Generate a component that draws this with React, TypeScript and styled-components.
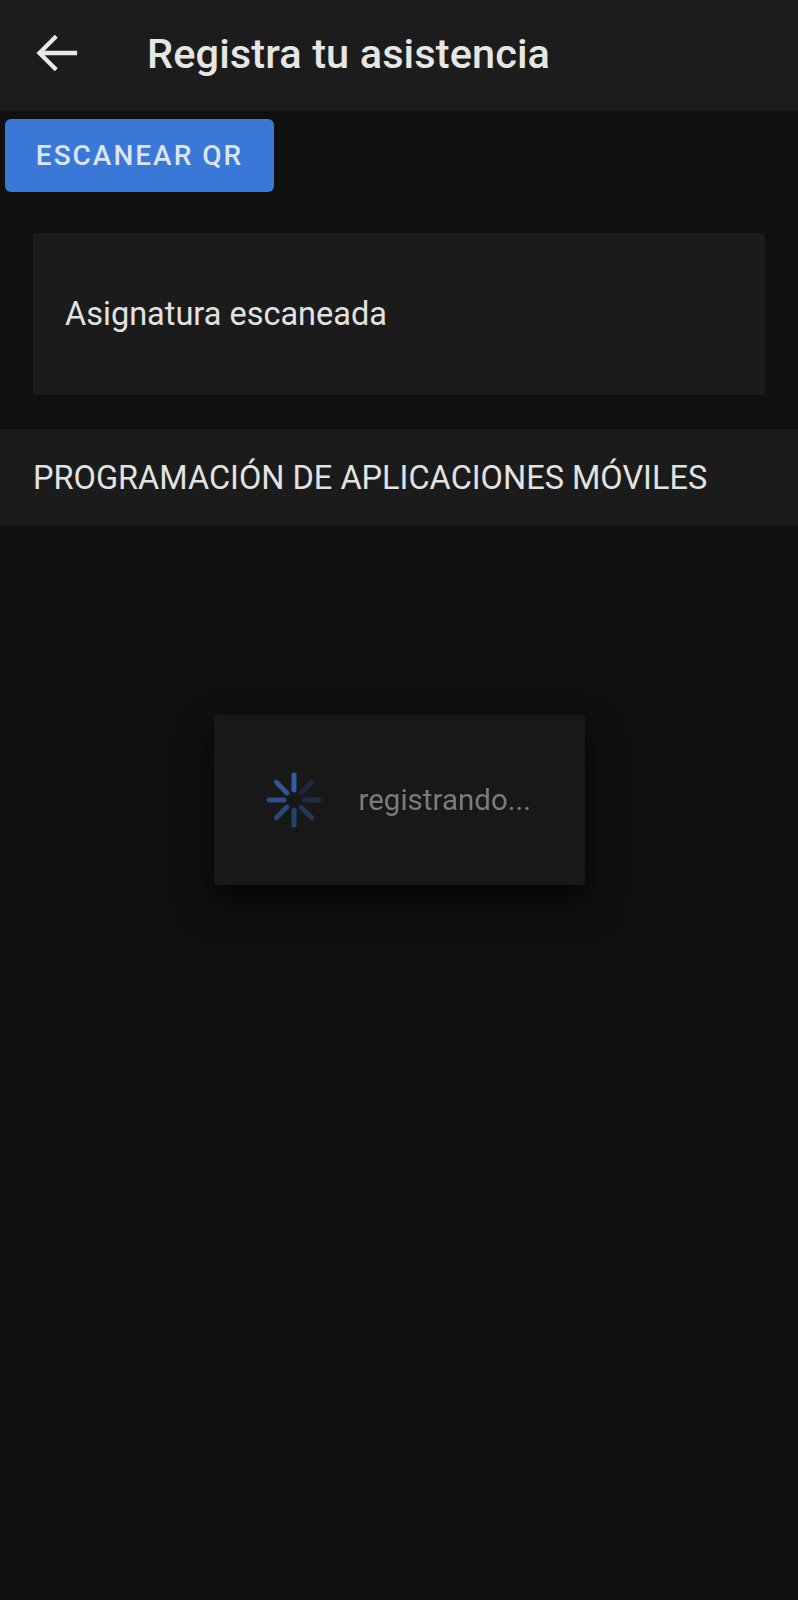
import React from "react";
import styled, { createGlobalStyle } from "styled-components";

const GlobalStyle = createGlobalStyle`
  html, body {
    margin: 0;
    padding: 0;
    background: #101010;
  }
  body {
    font-family: Roboto, "Noto Sans", "Liberation Sans", sans-serif;
    color: #e6e6e6;
    min-height: 1600px;
  }
  * { box-sizing: border-box; }
`;

const Page = styled.div`
  min-height: 1600px;
  background: #101010;
  display: flex;
  flex-direction: column;
`;

const Toolbar = styled.header`
  height: 111px;
  background: #1c1c1c;
  display: flex;
  align-items: center;
  padding: 0 0 5px 30px;
  gap: 63px;
`;

const BackButton = styled.button`
  width: 54px;
  height: 54px;
  padding: 0;
  border: none;
  background: transparent;
  color: #e8e8e8;
  display: flex;
  align-items: center;
  justify-content: center;
`;

const Title = styled.h1`
  margin: 0;
  font-size: 41.5px;
  font-weight: 500;
  color: #e6e6e6;
  letter-spacing: 0.1px;
`;

const Content = styled.main`
  display: flex;
  flex-direction: column;
  padding-top: 8px;
`;

const ScanButton = styled.button`
  align-self: flex-start;
  margin-left: 5px;
  width: 269px;
  height: 73px;
  border: none;
  border-radius: 6px;
  background: #3a78d8;
  color: #dde4ee;
  font-family: Roboto, "Liberation Sans", sans-serif;
  font-size: 28px;
  font-weight: 500;
  letter-spacing: 2px;
  text-transform: uppercase;
`;

const Card = styled.section`
  margin: 41px 33px 0 33px;
  height: 162px;
  background: #1b1b1b;
  display: flex;
  align-items: center;
  padding-left: 32px;
`;

const CardText = styled.span`
  font-size: 32.5px;
  color: #e2e2e2;
`;

const SubjectRow = styled.div`
  margin-top: 34px;
  height: 97px;
  background: #1b1b1b;
  display: flex;
  align-items: center;
  padding-left: 33px;
`;

const SubjectText = styled.span`
  font-size: 32.5px;
  color: #e2e2e2;
`;

const Overlay = styled.div`
  position: fixed;
  inset: 0;
  display: flex;
  align-items: center;
  justify-content: center;
  pointer-events: none;
`;

const Dialog = styled.div`
  width: 371px;
  height: 170px;
  background: #181818;
  border-radius: 3px;
  box-shadow: 0 18px 38px rgba(0, 0, 0, 0.55), 0 6px 16px rgba(0, 0, 0, 0.4);
  display: flex;
  align-items: center;
  padding-left: 52px;
  gap: 37px;
`;

const DialogText = styled.span`
  font-size: 29.5px;
  color: #7b7b7b;
`;

const ArrowBack = () => (
  <svg width="54" height="54" viewBox="0 0 24 24" fill="none">
    <path
      d="M20 12H4.8M11 5.2L4.2 12L11 18.8"
      stroke="currentColor"
      strokeWidth="1.9"
      strokeLinecap="square"
    />
  </svg>
);

const spokes = [
  { angle: 0, opacity: 1 },
  { angle: 45, opacity: 0.25 },
  { angle: 90, opacity: 0.3 },
  { angle: 135, opacity: 0.45 },
  { angle: 180, opacity: 0.6 },
  { angle: 225, opacity: 0.7 },
  { angle: 270, opacity: 0.8 },
  { angle: 315, opacity: 0.9 },
];

const Spinner = () => (
  <svg width="56" height="56" viewBox="-28 -28 56 56">
    {spokes.map((s) => (
      <line
        key={s.angle}
        x1="0"
        y1="-10"
        x2="0"
        y2="-25"
        stroke="#2f5ea3"
        strokeWidth="5"
        strokeLinecap="round"
        opacity={s.opacity}
        transform={`rotate(${s.angle})`}
      />
    ))}
  </svg>
);

export default function App() {
  return (
    <>
      <GlobalStyle />
      <Page>
        <Toolbar>
          <BackButton aria-label="Volver">
            <ArrowBack />
          </BackButton>
          <Title>Registra tu asistencia</Title>
        </Toolbar>
        <Content>
          <ScanButton>Escanear QR</ScanButton>
          <Card>
            <CardText>Asignatura escaneada</CardText>
          </Card>
          <SubjectRow>
            <SubjectText>PROGRAMACIÓN DE APLICACIONES MÓVILES</SubjectText>
          </SubjectRow>
        </Content>
        <Overlay>
          <Dialog>
            <Spinner />
            <DialogText>registrando...</DialogText>
          </Dialog>
        </Overlay>
      </Page>
    </>
  );
}
